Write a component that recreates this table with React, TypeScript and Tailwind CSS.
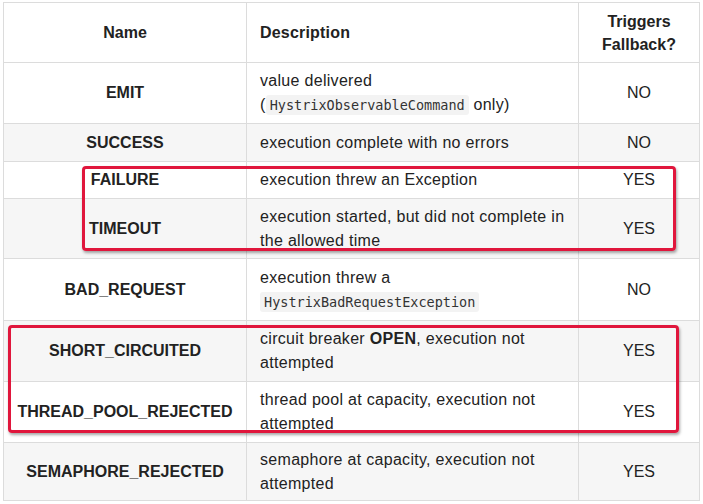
import React from "react";

type Row = {
  name: string;
  desc: React.ReactNode;
  fb: string;
  h: string;
  gray: boolean;
};

const Code = ({ children }: { children: React.ReactNode }) => (
  <code className="rounded-[3px] bg-[#f3f3f3] px-[4px] py-[2px] text-[13.5px] tracking-normal [font-family:'DejaVu_Sans_Mono',monospace] text-[#333]">
    {children}
  </code>
);

const rows: Row[] = [
  {
    name: "EMIT",
    desc: (
      <>
        value delivered
        <br />(<Code>HystrixObservableCommand</Code> only)
      </>
    ),
    fb: "NO",
    h: "h-[61px]",
    gray: false,
  },
  { name: "SUCCESS", desc: "execution complete with no errors", fb: "NO", h: "h-[38px]", gray: true },
  { name: "FAILURE", desc: "execution threw an Exception", fb: "YES", h: "h-[37px]", gray: false },
  {
    name: "TIMEOUT",
    desc: "execution started, but did not complete in the allowed time",
    fb: "YES",
    h: "h-[60px]",
    gray: true,
  },
  {
    name: "BAD_REQUEST",
    desc: (
      <>
        execution threw a
        <br />
        <Code>HystrixBadRequestException</Code>
      </>
    ),
    fb: "NO",
    h: "h-[62px]",
    gray: false,
  },
  {
    name: "SHORT_CIRCUITED",
    desc: (
      <>
        circuit breaker <b>OPEN</b>, execution not attempted
      </>
    ),
    fb: "YES",
    h: "h-[61px]",
    gray: true,
  },
  {
    name: "THREAD_POOL_REJECTED",
    desc: "thread pool at capacity, execution not attempted",
    fb: "YES",
    h: "h-[61px]",
    gray: false,
  },
  {
    name: "SEMAPHORE_REJECTED",
    desc: "semaphore at capacity, execution not attempted",
    fb: "YES",
    h: "h-[58px]",
    gray: true,
  },
];

export default function App() {
  return (
    <div className="w-[703px] h-[504px] overflow-hidden bg-white [font-family:'Liberation_Sans',Arial,sans-serif] text-[16px] text-[#222]">
      <div className="relative ml-[3px] mt-[2px] w-[696px]">
        <table className="w-full table-fixed border-collapse">
          <colgroup>
            <col className="w-[243px]" />
            <col className="w-[332px]" />
            <col className="w-[121px]" />
          </colgroup>
          <thead>
            <tr className="h-[60px]">
              <th className="border border-[#dcdcdc] text-center font-bold leading-[24px]">Name</th>
              <th className="border border-[#dcdcdc] px-[13px] text-left font-bold leading-[24px] tracking-[0.2px]">Description</th>
              <th className="border border-[#dcdcdc] px-[8px] text-center font-bold leading-[23px]">
                Triggers
                <br />
                Fallback?
              </th>
            </tr>
          </thead>
          <tbody>
            {rows.map((r) => (
              <tr key={r.name} className={`${r.h} ${r.gray ? "bg-[#f6f6f6]" : "bg-white"}`}>
                <td className="border border-[#dcdcdc] text-center font-bold leading-[24px]">{r.name}</td>
                <td className="border border-[#dcdcdc] px-[13px] align-middle leading-[24px] tracking-[0.3px]">{r.desc}</td>
                <td className="border border-[#dcdcdc] text-center leading-[24px]">{r.fb}</td>
              </tr>
            ))}
          </tbody>
        </table>
        <div className="pointer-events-none absolute left-[79px] top-[164px] h-[85px] w-[594px] rounded-[4px] border-[3px] border-[#e0163c] shadow-[1px_2px_3px_rgba(0,0,0,0.35)]" />
        <div className="pointer-events-none absolute left-[5px] top-[323px] h-[108px] w-[671px] rounded-[4px] border-[3px] border-[#e0163c] shadow-[1px_2px_3px_rgba(0,0,0,0.35)]" />
      </div>
    </div>
  );
}
